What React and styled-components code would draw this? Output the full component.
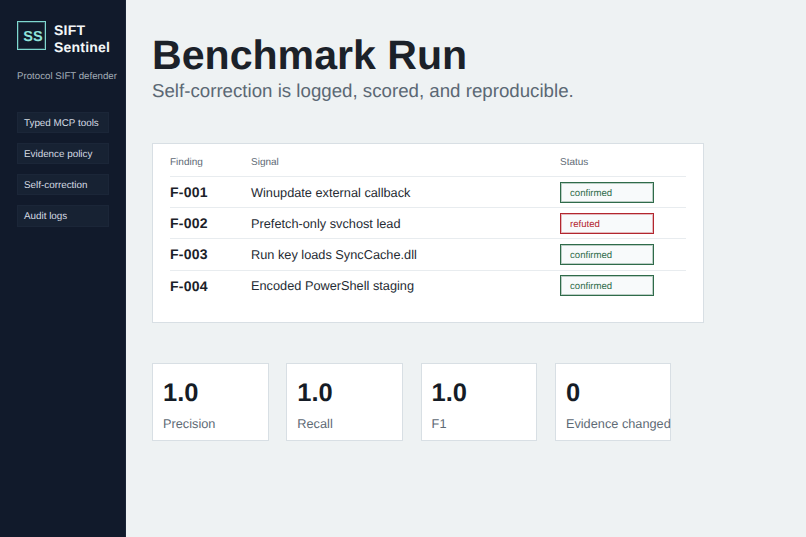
import React from "react";
import styled, { createGlobalStyle } from "styled-components";

const Global = createGlobalStyle`
  html, body { margin: 0; padding: 0; height: 100%; overflow: hidden; }
  body {
    font-family: "Liberation Sans", Arial, sans-serif;
    background: #eef2f3;
    text-rendering: geometricPrecision;
  }
  * { box-sizing: border-box; }
`;

const Shell = styled.div`
  display: flex;
  width: 806px;
  height: 537px;
`;

const Sidebar = styled.aside`
  width: 126px;
  flex: none;
  background: #111a2b;
  border-right: 1px solid #1a2436;
  padding: 21px 0 0 17px;
`;

const Brand = styled.div`
  display: flex;
  align-items: flex-start;
  gap: 8px;
`;

const LogoBox = styled.div`
  width: 29px;
  height: 29px;
  border: 1px solid #7fd8d0;
  box-shadow: inset 0 0 0 1px rgba(127, 216, 208, 0.25);
  color: #8fe3da;
  font-size: 14.5px;
  font-weight: 700;
  display: flex;
  align-items: center;
  justify-content: center;
  padding: 2px 0 0 3px;
`;

const BrandName = styled.div`
  color: #f3f6f8;
  font-size: 14px;
  font-weight: 700;
  line-height: 17px;
  letter-spacing: 0.2px;
  padding-top: 1px;
`;

const Tagline = styled.p`
  margin: 14px 0 0;
  color: #a3adb8;
  font-size: 9.7px;
  line-height: 14px;
  white-space: nowrap;
`;

const Nav = styled.nav`
  display: flex;
  flex-direction: column;
  gap: 10px;
  margin-top: 27.5px;
  width: 92px;
`;

const NavItem = styled.div`
  height: 21.3px;
  background: #172233;
  border: 1px solid #1b2638;
  color: #d5dbe3;
  font-size: 9.85px;
  line-height: 21px;
  padding-left: 6px;
  white-space: nowrap;
`;

const Main = styled.main`
  flex: 1;
  padding: 30px 0 0 26px;
`;

const Title = styled.h1`
  margin: 0;
  color: #1b2129;
  font-size: 41.1px;
  font-weight: 700;
  line-height: 51px;
`;

const Subtitle = styled.p`
  margin: 0;
  color: #5b6874;
  font-size: 18.7px;
  line-height: 20px;
`;

const Panel = styled.section`
  width: 552px;
  height: 180px;
  margin-top: 42px;
  background: #fff;
  border: 1px solid #d8dfe4;
  padding: 8px 17px 0;
`;

const Row = styled.div`
  display: grid;
  grid-template-columns: 81px 309px 1fr;
  align-items: center;
  height: ${(p) => (p.$head ? "25px" : "31.2px")};
  padding-bottom: ${(p) => (p.$head ? "4px" : "0")};
  border-bottom: 1px solid ${(p) => (p.$last ? "transparent" : "#e8ecef")};
`;

const HeadCell = styled.div`
  color: #5e6a75;
  font-size: 10px;
`;

const FindingId = styled.div`
  color: #1b2129;
  font-size: 14px;
  font-weight: 700;
  letter-spacing: 0.25px;
`;

const Signal = styled.div`
  color: #252b33;
  font-size: 12.75px;
`;

const Badge = styled.div`
  width: 94px;
  height: 21px;
  border: 1px solid ${(p) => (p.$bad ? "#b3262e" : "#2f6b4a")};
  box-shadow: inset 0 0 0 1px ${(p) => (p.$bad ? "rgba(179,38,46,.3)" : "rgba(47,107,74,.3)")};
  background: #f8fafb;
  color: ${(p) => (p.$bad ? "#b3262e" : "#2f6b4a")};
  font-size: 9.6px;
  line-height: 21px;
  padding-left: 9px;
`;

const Metrics = styled.div`
  display: flex;
  gap: 17.8px;
  margin-top: 40px;
`;

const Metric = styled.div`
  width: 116.5px;
  height: 78px;
  background: #fff;
  border: 1px solid #d8dfe4;
  padding: 14px 0 0 10px;
  white-space: nowrap;
`;

const MetricValue = styled.div`
  color: #151c26;
  font-size: 25.5px;
  font-weight: 700;
  line-height: 30px;
`;

const MetricLabel = styled.div`
  color: #5e6a75;
  font-size: 12.75px;
  line-height: 16px;
  margin-top: 8px;
`;

const nav = ["Typed MCP tools", "Evidence policy", "Self-correction", "Audit logs"];
const rows = [
  ["F-001", "Winupdate external callback", "confirmed"],
  ["F-002", "Prefetch-only svchost lead", "refuted"],
  ["F-003", "Run key loads SyncCache.dll", "confirmed"],
  ["F-004", "Encoded PowerShell staging", "confirmed"],
];
const metrics = [
  ["1.0", "Precision"],
  ["1.0", "Recall"],
  ["1.0", "F1"],
  ["0", "Evidence changed"],
];

export default function App() {
  return (
    <Shell>
      <Global />
      <Sidebar>
        <Brand>
          <LogoBox>SS</LogoBox>
          <BrandName>SIFT<br />Sentinel</BrandName>
        </Brand>
        <Tagline>Protocol SIFT defender</Tagline>
        <Nav>
          {nav.map((n) => <NavItem key={n}>{n}</NavItem>)}
        </Nav>
      </Sidebar>
      <Main>
        <Title>Benchmark Run</Title>
        <Subtitle>Self-correction is logged, scored, and reproducible.</Subtitle>
        <Panel>
          <Row $head>
            <HeadCell>Finding</HeadCell>
            <HeadCell>Signal</HeadCell>
            <HeadCell>Status</HeadCell>
          </Row>
          {rows.map(([id, sig, st], i) => (
            <Row key={id} $last={i === rows.length - 1}>
              <FindingId>{id}</FindingId>
              <Signal>{sig}</Signal>
              <Badge $bad={st === "refuted"}>{st}</Badge>
            </Row>
          ))}
        </Panel>
        <Metrics>
          {metrics.map(([v, l]) => (
            <Metric key={l}>
              <MetricValue>{v}</MetricValue>
              <MetricLabel>{l}</MetricLabel>
            </Metric>
          ))}
        </Metrics>
      </Main>
    </Shell>
  );
}
